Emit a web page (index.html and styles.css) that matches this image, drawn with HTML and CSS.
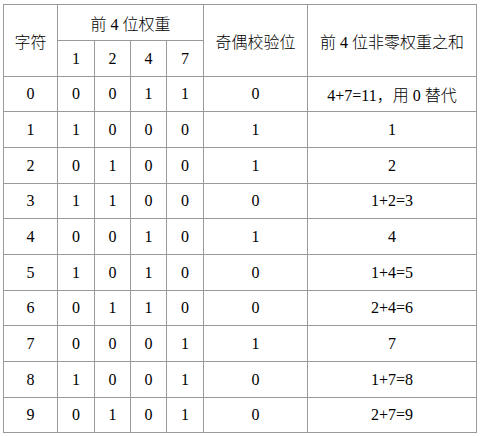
FILE: index.html
```html
<!DOCTYPE html>
<html lang="zh">
<head>
<meta charset="utf-8">
<link rel="stylesheet" href="styles.css">
</head>
<body>
<table class="tbl">
<colgroup>
<col class="c1"><col class="c2"><col class="c3"><col class="c4"><col class="c5"><col class="c6"><col class="c7">
</colgroup>
<tr class="h">
<td rowspan="2">字符</td>
<td colspan="4">前 4 位权重</td>
<td rowspan="2">奇偶校验位</td>
<td rowspan="2">前 4 位非零权重之和</td>
</tr>
<tr class="h"><td>1</td><td>2</td><td>4</td><td>7</td></tr>
<tr class="r35"><td>0</td><td>0</td><td>0</td><td>1</td><td>1</td><td>0</td><td>4+7=11，用 0 替代</td></tr>
<tr class="r36"><td>1</td><td>1</td><td>0</td><td>0</td><td>0</td><td>1</td><td>1</td></tr>
<tr class="r36"><td>2</td><td>0</td><td>1</td><td>0</td><td>0</td><td>1</td><td>2</td></tr>
<tr class="r35"><td>3</td><td>1</td><td>1</td><td>0</td><td>0</td><td>0</td><td>1+2=3</td></tr>
<tr class="r36"><td>4</td><td>0</td><td>0</td><td>1</td><td>0</td><td>1</td><td>4</td></tr>
<tr class="r36"><td>5</td><td>1</td><td>0</td><td>1</td><td>0</td><td>0</td><td>1+4=5</td></tr>
<tr class="r35"><td>6</td><td>0</td><td>1</td><td>1</td><td>0</td><td>0</td><td>2+4=6</td></tr>
<tr class="r36"><td>7</td><td>0</td><td>0</td><td>0</td><td>1</td><td>1</td><td>7</td></tr>
<tr class="r36"><td>8</td><td>1</td><td>0</td><td>0</td><td>1</td><td>0</td><td>1+7=8</td></tr>
<tr class="r35"><td>9</td><td>0</td><td>1</td><td>0</td><td>1</td><td>0</td><td>2+7=9</td></tr>
</table>
</body>
</html>
```
FILE: styles.css
```css
html, body {
  margin: 0;
  padding: 0;
  background: #ffffff;
}
body {
  padding: 4px 0 0 3px;
  font-family: "Liberation Serif", "Noto Sans CJK SC", serif;
  font-size: 16px;
  font-weight: 300;
  color: #000000;
}
.tbl {
  border-collapse: collapse;
  table-layout: fixed;
  width: 473px;
}
.tbl td {
  border: 1px solid #9a9a9a;
  padding: 0;
  text-align: center;
  vertical-align: middle;
  white-space: nowrap;
}
.c1 { width: 54px; }
.c2 { width: 37px; }
.c3 { width: 36px; }
.c4 { width: 36px; }
.c5 { width: 37px; }
.c6 { width: 104px; }
.c7 { width: 169px; }
.h { height: 36px; }
.r35 { height: 35px; }
.r36 { height: 36px; }
```
